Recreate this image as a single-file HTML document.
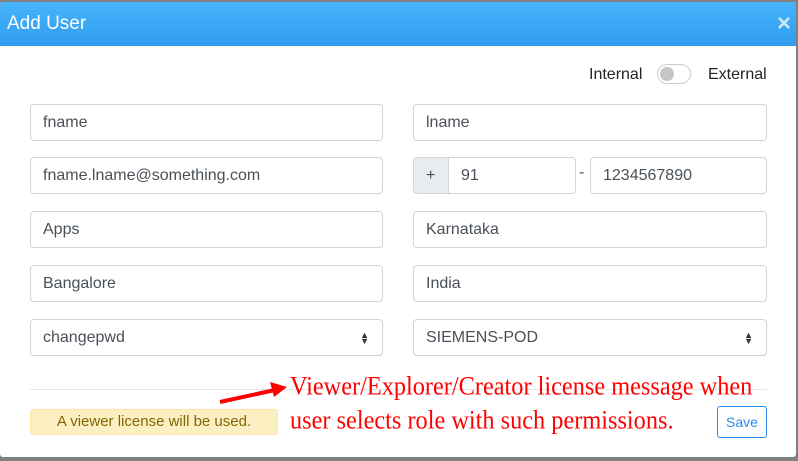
<!DOCTYPE html>
<html><head><style>
body{margin:0;width:798px;height:461px;background:#808080;position:relative;overflow:hidden;font-family:"Liberation Sans",sans-serif}
.dlg{position:absolute;left:0;top:2px;width:796px;height:455px;background:#fff;border-radius:3px;overflow:hidden}
.hd{height:44px;background:linear-gradient(#45b4fc,#319cef);color:#fff;font-size:19px;line-height:44px;padding-left:7px;position:relative}
.x{position:absolute;right:5px;top:0;color:#cfe6fa;font-size:24px;font-weight:bold}
.in{position:absolute;height:37px;box-sizing:border-box;border:1px solid #ced4da;border-radius:4px;font-size:16px;color:#495057;line-height:35px;padding-left:12px}
.t{position:absolute;font-size:16px;color:#212529}
.arr{position:absolute;right:13px;top:12px;font-size:9px;line-height:6px;color:#333}
.red{position:absolute;font-family:"Liberation Serif",serif;color:#f00;font-size:24px;transform-origin:0 50%;transform:scale(1.013,1.1)}
</style></head><body>
<div class="dlg">
<div class="hd">Add User<span class="x">×</span></div>
<div class="t" style="left:589px;top:64px">Internal</div>
<div style="position:absolute;left:657px;top:62px;width:34px;height:20px;border:1px solid #ccc;border-radius:10px;box-sizing:border-box"><div style="position:absolute;left:2px;top:2px;width:14px;height:14px;border-radius:50%;background:#c4c6c8"></div></div>
<div class="t" style="left:708px;top:64px">External</div>
<div class="in" style="left:30px;top:102px;width:353px">fname</div>
<div class="in" style="left:413px;top:102px;width:354px">lname</div>
<div class="in" style="left:30px;top:155px;width:353px">fname.lname@something.com</div>
<div class="in" style="left:413px;top:155px;width:36px;background:#e9ecef;border-radius:4px 0 0 4px">+</div>
<div class="in" style="left:448px;top:155px;width:128px;border-radius:0 4px 4px 0">91</div>
<div class="t" style="left:579px;top:162px;color:#495057">-</div>
<div class="in" style="left:590px;top:155px;width:177px">1234567890</div>
<div class="in" style="left:30px;top:209px;width:353px">Apps</div>
<div class="in" style="left:413px;top:209px;width:354px">Karnataka</div>
<div class="in" style="left:30px;top:263px;width:353px">Bangalore</div>
<div class="in" style="left:413px;top:263px;width:354px">India</div>
<div class="in" style="left:30px;top:317px;width:353px">changepwd<div class="arr">▲<br>▼</div></div>
<div class="in" style="left:413px;top:317px;width:354px">SIEMENS-POD<div class="arr">▲<br>▼</div></div>
<div style="position:absolute;left:30px;top:387px;width:737px;height:1px;background:#e5e5e5"></div>
<div style="position:absolute;left:30px;top:407px;width:248px;height:26px;background:#fcf0c3;border:1px solid #f9e6a6;border-radius:3px;box-sizing:border-box;color:#856404;font-size:15px;line-height:24px;text-align:center">A viewer license will be used.</div>
<div style="position:absolute;left:717px;top:404px;width:50px;height:32px;border:1px solid #2a8cf0;border-radius:3px;box-sizing:border-box;color:#2a8cf0;font-size:14px;line-height:30px;text-align:center">Save</div>
<svg style="position:absolute;left:215px;top:378px" width="75" height="30"><line x1="5" y1="22" x2="60" y2="10" stroke="#f00" stroke-width="4"/><polygon points="72,7 55,2 59,17" fill="#f00"/></svg>
<div class="red" style="left:290px;top:372px">Viewer/Explorer/Creator license message when</div>
<div class="red" style="left:290px;top:406px">user selects role with such permissions.</div>
</div>
</body></html>
